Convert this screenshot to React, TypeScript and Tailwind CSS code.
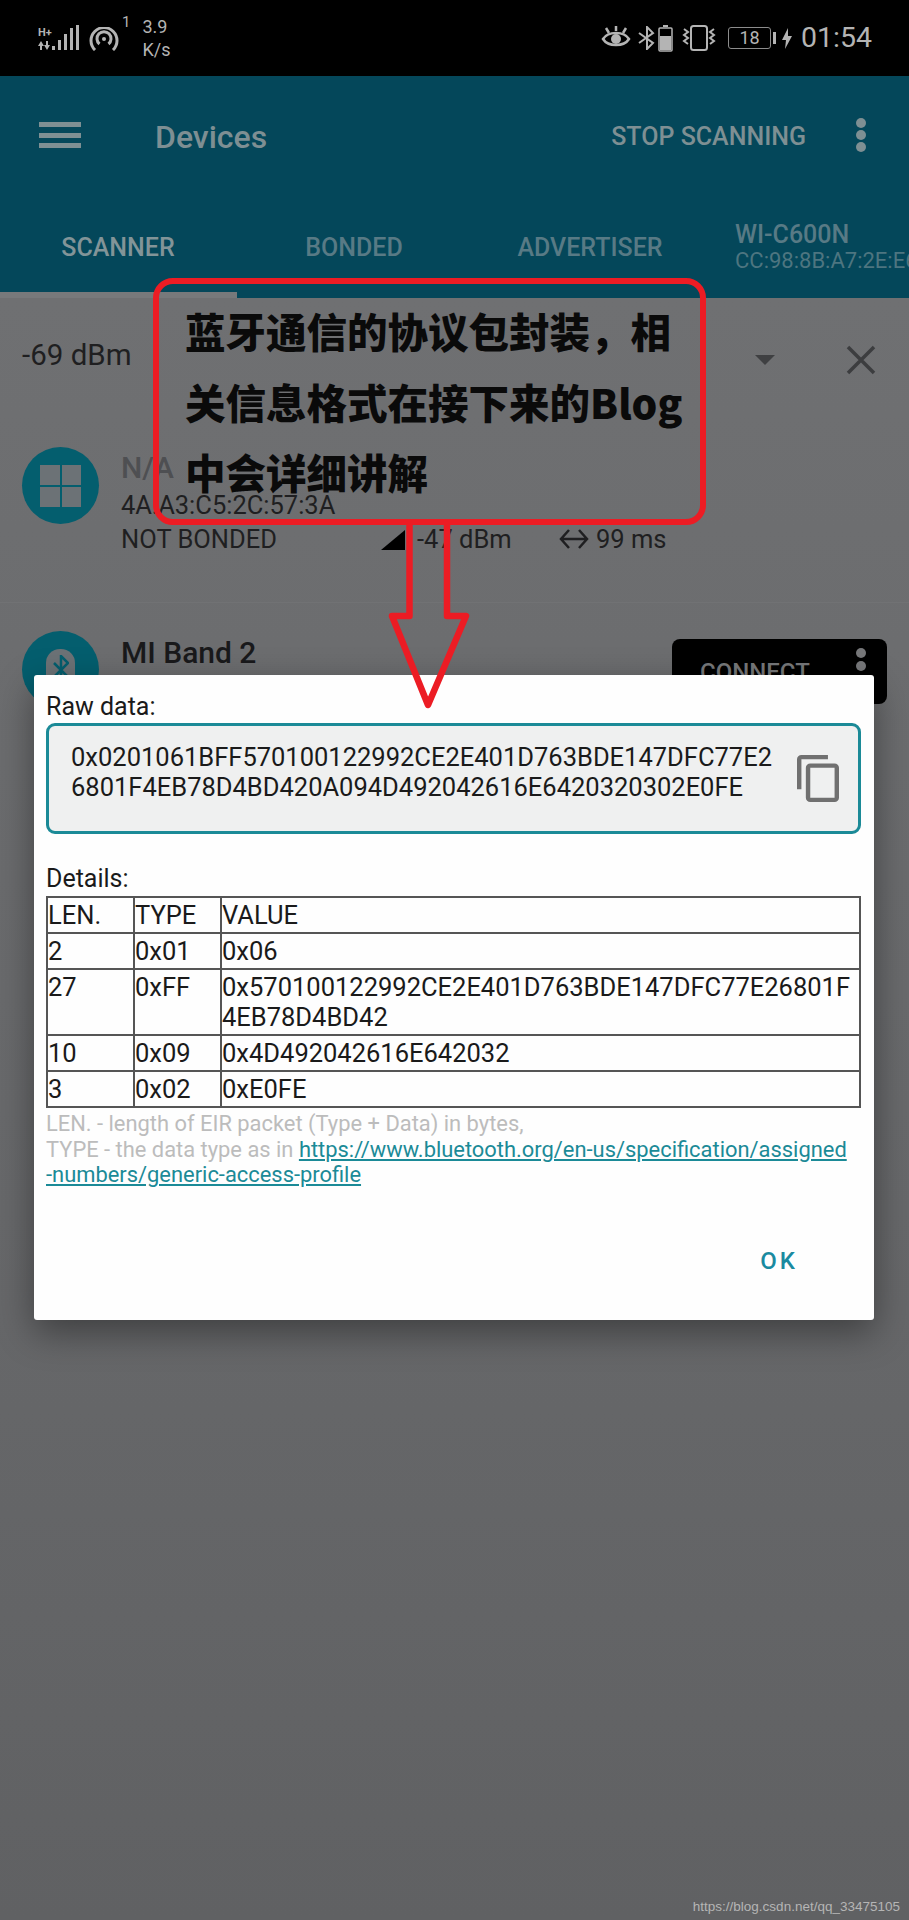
const rows = [
  { len: "2", type: "0x01", value: "0x06" },
  { len: "27", type: "0xFF", value: "0x570100122992CE2E401D763BDE147DFC77E26801F4EB78D4BD42" },
  { len: "10", type: "0x09", value: "0x4D492042616E642032" },
  { len: "3", type: "0x02", value: "0xE0FE" },
];

function StatusBar() {
  return (
    <div className="flex h-[76px] shrink-0 items-center bg-black pl-[38px] pr-[37px] text-[#b4b4b4]">
      <svg width="43" height="28" viewBox="0 0 43 28" fill="currentColor" className="mt-[1px]">
        <text x="0" y="11" fontSize="11" fontWeight="700" fontFamily="Roboto, sans-serif">H+</text>
        <path d="M3 16l-3 5h2v4h2v-4h2zM9 25l3-5h-2v-4H8v4H6z" />
        <rect x="14" y="21" width="3" height="4" />
        <rect x="20" y="15" width="3" height="10" />
        <rect x="26" y="9" width="3" height="16" />
        <rect x="32" y="3" width="3" height="22" />
        <rect x="38" y="0" width="3" height="25" />
      </svg>
      <svg width="30" height="24" viewBox="0 0 30 24" fill="none" stroke="currentColor" strokeWidth="3" className="ml-[8px] mt-[2px]">
        <path d="M6 23A13 13 0 1 1 24 23" />
        <path d="M10.5 17A7 7 0 1 1 19.5 17" />
        <circle cx="15" cy="12" r="2" fill="currentColor" stroke="none" />
      </svg>
      <span className="relative -top-[16px] ml-[3px] font-['Roboto',sans-serif] text-[15px] leading-none">1</span>
      <div className="ml-[12px] flex flex-col gap-[4px] font-['Roboto',sans-serif] text-[18px] leading-[19px]">
        <span>3.9</span>
        <span>K/s</span>
      </div>
      <svg width="30" height="24" viewBox="0 0 30 24" fill="none" stroke="currentColor" className="ml-auto">
        <path d="M2 13C7 5 23 5 28 13C23 21 7 21 2 13Z" strokeWidth="2.5" />
        <circle cx="15" cy="13" r="5" fill="currentColor" stroke="none" />
        <path d="M5 2l3 5M15 0v5M25 2l-3 5" strokeWidth="2.5" />
      </svg>
      <svg width="18" height="24" viewBox="0 0 18 24" fill="none" stroke="currentColor" strokeWidth="2" className="ml-[7px]">
        <path d="M1 7l14 10-6 6V1l6 6L1 17" />
      </svg>
      <svg width="15" height="27" viewBox="0 0 15 27" className="ml-[2px]">
        <rect x="5" y="0" width="5" height="2" fill="currentColor" />
        <rect x="1" y="3" width="13" height="23" rx="1" fill="none" stroke="currentColor" strokeWidth="1.5" />
        <rect x="2" y="11" width="11" height="14" fill="currentColor" />
      </svg>
      <svg width="34" height="26" viewBox="0 0 34 26" fill="none" stroke="currentColor" strokeWidth="2" className="ml-[9px]">
        <rect x="9" y="1" width="16" height="24" rx="2.5" />
        <path d="M2 4l4 3-4 3 4 3-4 3 4 3M32 4l-4 3 4 3-4 3 4 3-4 3" />
      </svg>
      <div className="ml-[12px] flex h-[22px] w-[43px] items-center justify-center rounded-[3px] border border-[#8c8c8c] font-['Roboto',sans-serif] text-[18px] leading-none">
        18
      </div>
      <div className="ml-[2px] h-[12px] w-[3px] bg-[#b4b4b4]" />
      <svg width="10" height="21" viewBox="0 0 10 21" fill="currentColor" className="ml-[6px]">
        <path d="M6 0L0 12h4l-1 9 7-13H6z" />
      </svg>
      <span className="ml-[9px] font-['Roboto',sans-serif] text-[28.5px] leading-none">01:54</span>
    </div>
  );
}

function Header() {
  return (
    <div className="flex h-[222px] shrink-0 flex-col bg-[#04475a] font-['Roboto',sans-serif] font-medium">
      <div className="flex h-[118px] items-center pl-[39px] pr-[43px]">
        <div className="flex h-[26px] w-[42px] flex-col justify-between">
          <div className="h-[5px] bg-[#7e8f93]" />
          <div className="h-[5px] bg-[#7e8f93]" />
          <div className="h-[5px] bg-[#7e8f93]" />
        </div>
        <span className="ml-[74px] mt-[4px] text-[32px] leading-none text-[#7e8f93]">Devices</span>
        <span className="ml-auto mt-[2px] text-[25px] leading-none text-[#7e8f93]">STOP SCANNING</span>
        <div className="ml-[50px] flex flex-col gap-[2px]">
          <div className="h-[10px] w-[10px] rounded-full bg-[#7e8f93]" />
          <div className="h-[10px] w-[10px] rounded-full bg-[#7e8f93]" />
          <div className="h-[10px] w-[10px] rounded-full bg-[#7e8f93]" />
        </div>
      </div>
      <div className="flex h-[98px] items-center overflow-hidden pt-[9px] text-[25px] leading-none">
        <div className="w-[236px] shrink-0 text-center text-[#829498]">SCANNER</div>
        <div className="w-[236px] shrink-0 text-center text-[#587a85]">BONDED</div>
        <div className="w-[236px] shrink-0 text-center text-[#587a85]">ADVERTISER</div>
        <div className="relative -top-[1px] shrink-0 whitespace-nowrap pl-[27px] text-[#587a85]">
          <div className="text-[25px] leading-[28px]">WI-C600N</div>
          <div className="text-[22px] font-normal leading-[23px] text-[#4d7580]">CC:98:8B:A7:2E:E6</div>
        </div>
      </div>
      <div className="h-[6px] w-[237px] bg-[#77797b]" />
    </div>
  );
}

function DeviceList() {
  return (
    <div className="flex-1 bg-gradient-to-b from-[#6f7072] via-[#68696b] to-[#606163] font-['Roboto',sans-serif] text-[#1f1f21]">
      <div className="flex h-[135px] items-start pl-[22px] pr-[33px] pt-[40px]">
        <span className="text-[29.5px] leading-[34px]">-69 dBm</span>
        <div className="ml-auto mt-[17px] h-0 w-0 border-x-[10px] border-t-[10px] border-x-transparent border-t-[#3f4042]" />
        <svg width="30" height="30" viewBox="0 0 30 30" stroke="#3c3d3f" strokeWidth="3.5" className="ml-[71px] mt-[7px]">
          <path d="M2 2L28 28M28 2L2 28" />
        </svg>
      </div>

      <div className="flex h-[170px] gap-[22px] border-b border-[#717274] pl-[22px] pt-[14px]">
        <div className="grid h-[77px] w-[77px] shrink-0 place-items-center rounded-full bg-[#045e6e]">
          <div className="grid h-[42px] w-[41px] grid-cols-2 gap-[2px]">
            <div className="bg-[#6c7276]" />
            <div className="bg-[#6c7276]" />
            <div className="bg-[#6c7276]" />
            <div className="bg-[#6c7276]" />
          </div>
        </div>
        <div>
          <div className="text-[30px] font-medium leading-[41px] text-[#4e4f52]">N/A</div>
          <div className="text-[25.5px] leading-[34px]">4A:A3:C5:2C:57:3A</div>
          <div className="flex items-center text-[25.5px] leading-[34px]">
            <span className="w-[260px] whitespace-nowrap">NOT BONDED</span>
            <div className="mt-[1px] h-0 w-0 border-b-[20px] border-l-[24px] border-b-black border-l-transparent" />
            <span className="ml-[12px] w-[142px] whitespace-nowrap">-47 dBm</span>
            <svg width="30" height="22" viewBox="0 0 30 22" fill="none" stroke="#1f1f21" strokeWidth="2.5">
              <path d="M2 11h26M10 2l-8 9 8 9M20 2l8 9-8 9" />
            </svg>
            <span className="ml-[7px] whitespace-nowrap">99 ms</span>
          </div>
        </div>
      </div>

      <div className="flex h-[120px] gap-[22px] pl-[22px] pr-[22px] pt-[28px]">
        <div className="flex h-[77px] w-[77px] shrink-0 justify-center rounded-full bg-[#045e6e] pt-[18px]">
          <div className="flex h-[59px] w-[29px] justify-center rounded-t-[14px] bg-[#6c7276] pt-[6px]">
            <svg width="16" height="30" viewBox="0 0 16 30" fill="none" stroke="#045e6e" strokeWidth="2.5">
              <path d="M1 8l14 14-7 7V1l7 7L1 22" />
            </svg>
          </div>
        </div>
        <div className="pt-[4px] text-[30px] font-medium leading-[36px] text-[#19191b]">MI Band 2</div>
        <div className="ml-auto mt-[8px] flex h-[65px] w-[215px] items-start rounded-[8px] bg-black pl-[28px] pr-[21px] pt-[9px] text-[#77787a]">
          <span className="mt-[6px] text-[24px] font-medium leading-[36px]">CONNECT</span>
          <div className="ml-auto flex flex-col gap-[3px]">
            <div className="h-[10px] w-[10px] rounded-full bg-[#77787a]" />
            <div className="h-[10px] w-[10px] rounded-full bg-[#77787a]" />
          </div>
        </div>
      </div>
    </div>
  );
}

function RawDataDialog() {
  return (
    <div className="absolute left-[34px] top-[675px] h-[645px] w-[840px] rounded-[3px] bg-[#fefefe] pl-[12px] pr-[13px] pt-[17px] font-['Roboto',sans-serif] text-[#1a1a1a] shadow-[0_12px_36px_rgba(0,0,0,0.4)]">
      <div className="text-[25px] leading-[30px]">Raw data:</div>
      <div className="mt-[1px] flex h-[111px] w-[815px] rounded-[9px] border-[3px] border-[#1b8a97] bg-[#eff0f0] pl-[22px] pr-[19px] pt-[16px]">
        <div className="whitespace-nowrap text-[25.5px] leading-[30px]">
          <div>0x0201061BFF570100122992CE2E401D763BDE147DFC77E2</div>
          <div>6801F4EB78D4BD420A094D492042616E6420320302E0FE</div>
        </div>
        <svg width="42" height="47" viewBox="2 1 19 22" preserveAspectRatio="none" fill="#707070" className="ml-auto mt-[13px]">
          <path d="M16 1H4c-1.1 0-2 .9-2 2v14h2V3h12V1zm3 4H8c-1.1 0-2 .9-2 2v14c0 1.1.9 2 2 2h11c1.1 0 2-.9 2-2V7c0-1.1-.9-2-2-2zm0 16H8V7h11v14z" />
        </svg>
      </div>
      <div className="mb-[2px] mt-[30px] text-[25px] leading-[30px]">Details:</div>
      <table className="w-[815px] table-fixed border-collapse text-[25.5px] leading-[30px]">
        <colgroup>
          <col className="w-[87px]" />
          <col className="w-[87px]" />
          <col />
        </colgroup>
        <thead>
          <tr>
            <th className="border-2 border-[#555] py-[2px] text-left font-normal">LEN.</th>
            <th className="border-2 border-[#555] py-[2px] text-left font-normal">TYPE</th>
            <th className="border-2 border-[#555] py-[2px] text-left font-normal">VALUE</th>
          </tr>
        </thead>
        <tbody>
          {rows.map((r) => (
            <tr key={r.len}>
              <td className="border-2 border-[#555] py-[2px] align-top">{r.len}</td>
              <td className="border-2 border-[#555] py-[2px] align-top">{r.type}</td>
              <td className="border-2 border-[#555] py-[2px] align-top break-all">{r.value}</td>
            </tr>
          ))}
        </tbody>
      </table>
      <div className="mt-[3px] w-[815px] text-[21.9px] leading-[25.5px] text-[#bcbcbc]">
        <div>LEN. - length of EIR packet (Type + Data) in bytes,</div>
        <div>
          TYPE - the data type as in{" "}
          <span className="text-[#1b8a97] underline">
            https://www.bluetooth.org/en-us/specification/assigned
            <br />
            -numbers/generic-access-profile
          </span>
        </div>
      </div>
      <div className="mt-[58px] flex justify-end pr-[63px]">
        <span className="text-[24px] font-medium leading-[30px] tracking-[3px] text-[#1a8aa0]">OK</span>
      </div>
    </div>
  );
}

function Annotation() {
  return (
    <>
      <div className="absolute left-[153px] top-[278px] h-[247px] w-[553px] rounded-[20px] border-[6px] border-[#ec1c24] pl-[26px] pt-[12px] font-['Noto_Sans_CJK_SC',sans-serif] text-[40.5px] font-black leading-[70.5px] text-[#0a0a0a]">
        <div className="whitespace-nowrap">蓝牙通信的协议包封装，相</div>
        <div className="whitespace-nowrap">关信息格式在接下来的Blog</div>
        <div className="whitespace-nowrap">中会详细讲解</div>
      </div>
      <svg width="90" height="195" viewBox="0 0 90 195" fill="none" stroke="#ec1c24" strokeWidth="6.5" strokeLinejoin="round" className="absolute left-[385px] top-[520px]">
        <path d="M24.5 0V96H7L43 185L81 96H62V0" />
      </svg>
    </>
  );
}

export default function App() {
  return (
    <div className="relative flex h-[1920px] w-[909px] flex-col overflow-hidden">
      <StatusBar />
      <Header />
      <DeviceList />
      <RawDataDialog />
      <Annotation />
      <span className="absolute bottom-[7px] right-[9px] font-['Liberation_Sans',sans-serif] text-[13.5px] leading-none text-[#b5b5b5]">
        https://blog.csdn.net/qq_33475105
      </span>
    </div>
  );
}
